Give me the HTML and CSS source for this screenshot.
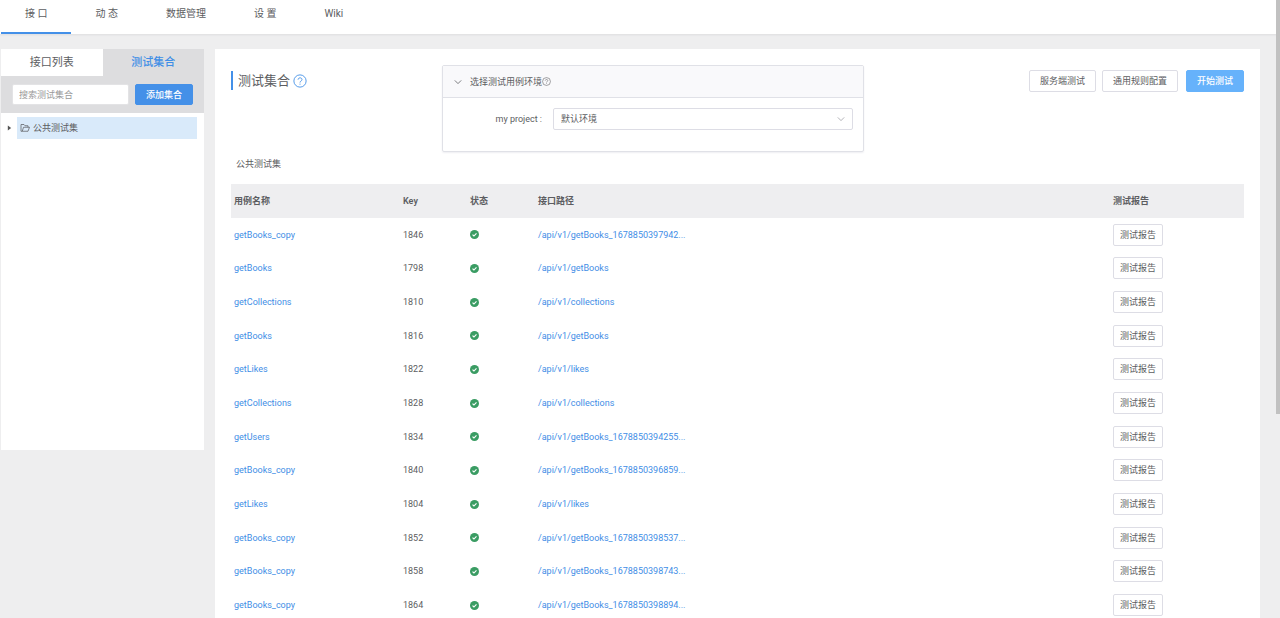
FILE: index.html
```html
<!DOCTYPE html>
<html lang="zh-CN">
  <head>
    <meta charset="UTF-8" />
    <meta name="viewport" content="width=device-width, initial-scale=1.0" />
    <title>测试集合</title>
    <link rel="stylesheet" href="styles.css">
  </head>
  <body>
    <nav class="nav">
      <a class="nav-item active" href="#">接 口</a>
      <a class="nav-item" href="#">动 态</a>
      <a class="nav-item" href="#">数据管理</a>
      <a class="nav-item" href="#">设 置</a>
      <a class="nav-item" href="#">Wiki</a>
    </nav>
    <div class="page">
      <aside class="sidebar">
        <div class="tabs">
          <button class="tab">接口列表</button>
          <button class="tab active">测试集合</button>
        </div>
        <div class="filter">
          <input class="search" type="text" placeholder="搜索测试集合" aria-label="搜索测试集合" />
          <button class="btn btn-primary">添加集合</button>
        </div>
        <div class="tree">
          <svg class="caret" viewBox="0 0 6 6"><path d="M1 0L5 3L1 6Z" /></svg>
          <a class="tree-node" href="#">
            <svg class="folder" viewBox="0 0 20 20">
              <path d="M4.500 16.500H2V3H8L10 5.500H16V8.500M4.500 16.500L7 8.500H19L16 16.500Z" />
            </svg>
            公共测试集
          </a>
        </div>
      </aside>
      <main class="content">
        <div class="toolbar">
          <h1 class="title">
            测试集合
            <a class="help" href="#" aria-label="help">
              <svg viewBox="0 0 16 16">
                <circle cx="8" cy="8" r="7" />
                <path d="M5.800 6.500C5.800 3.600 10.300 3.700 10.300 6.400C10.300 8 8 8 8 9.800M8 11V12.200" />
              </svg>
            </a>
          </h1>
          <section class="env">
            <button class="env-header">
              <svg class="arrow" viewBox="0 0 10 10"><path d="M1 3L5 7L9 3" /></svg>
              <span>选择测试用例环境</span>
              <svg class="tip" viewBox="0 0 16 16">
                <circle cx="8" cy="8" r="7" />
                <path d="M5.800 6.500C5.800 3.600 10.300 3.700 10.300 6.400C10.300 8 8 8 8 9.800M8 11V12.200" />
              </svg>
            </button>
            <div class="env-body">
              <label class="env-label" for="env">my project :</label>
              <div class="select-wrap">
                <select class="select" id="env">
                  <option>默认环境</option>
                </select>
                <svg class="select-arrow" viewBox="0 0 10 10"><path d="M1 3L5 7L9 3" /></svg>
              </div>
            </div>
          </section>
          <div class="actions">
            <button class="btn">服务端测试</button>
            <button class="btn">通用规则配置</button>
            <button class="btn btn-start">开始测试</button>
          </div>
        </div>
        <div class="col-name">公共测试集</div>
        <table class="cases">
          <thead>
            <tr>
              <th class="c-name">用例名称</th>
              <th class="c-key">Key</th>
              <th class="c-status">状态</th>
              <th>接口路径</th>
              <th class="c-report">测试报告</th>
            </tr>
          </thead>
          <tbody id="caseList"></tbody>
        </table>
      </main>
    </div>
    <div class="scroll-thumb"></div>
    <script>
      const cases = [
        ["getBooks_copy", 1846, "/api/v1/getBooks_1678850397942..."],
        ["getBooks", 1798, "/api/v1/getBooks"],
        ["getCollections", 1810, "/api/v1/collections"],
        ["getBooks", 1816, "/api/v1/getBooks"],
        ["getLikes", 1822, "/api/v1/likes"],
        ["getCollections", 1828, "/api/v1/collections"],
        ["getUsers", 1834, "/api/v1/getBooks_1678850394255..."],
        ["getBooks_copy", 1840, "/api/v1/getBooks_1678850396859..."],
        ["getLikes", 1804, "/api/v1/likes"],
        ["getBooks_copy", 1852, "/api/v1/getBooks_1678850398537..."],
        ["getBooks_copy", 1858, "/api/v1/getBooks_1678850398743..."],
        ["getBooks_copy", 1864, "/api/v1/getBooks_1678850398894..."],
      ];

      document.querySelector("#caseList").innerHTML = cases
        .map(
          ([name, key, path]) => `<tr>
            <td><a href="#">${name}</a></td>
            <td>${key}</td>
            <td>
              <svg class="ok" viewBox="0 0 16 16">
                <circle cx="8" cy="8" r="8" />
                <path d="M4.500 8.200L7 10.700L11.500 5.800" />
              </svg>
            </td>
            <td><a href="#">${path}</a></td>
            <td><button class="btn btn-report">测试报告</button></td>
          </tr>`
        )
        .join("");
    </script>
  </body>
</html>
```
FILE: styles.css
```css
* {
  box-sizing: border-box;
}
body {
  margin: 0;
  height: 100vh;
  overflow: hidden;
  display: flex;
  flex-direction: column;
  background-color: #eeeeef;
  color: #5c5d61;
  font-family: Roboto, "Noto Sans CJK SC", sans-serif;
  font-size: 9px;
  line-height: 14px;
}
a {
  color: #3f8ee6;
  text-decoration: none;
}
button,
input,
select {
  font: inherit;
  color: inherit;
}
button {
  cursor: pointer;
}
svg {
  fill: none;
  stroke: currentColor;
  flex: none;
}

.nav {
  display: flex;
  flex: none;
  height: 34px;
  padding-left: 1px;
  background-color: #fff;
  box-shadow: 0 1px 2px #dddddf;
}
.nav-item {
  padding: 7px 24px 0;
  border-bottom: 2px solid transparent;
  color: #5c5d61;
  font-size: 10px;
}
.nav-item.active {
  border-color: #4490e8;
}

.page {
  display: flex;
  flex: 1;
  min-height: 0;
  align-items: flex-start;
  gap: 11px;
  padding: 15px 20px 0 1px;
}

.sidebar {
  width: 203px;
  height: 401px;
  flex: none;
  background-color: #fff;
}
.tabs {
  display: flex;
  background-color: #dddddf;
}
.tab {
  flex: 1;
  height: 27px;
  padding: 0;
  border: none;
  background-color: #fff;
  font-size: 11px;
}
.tab.active {
  background-color: #dddddf;
  color: #3f8ee6;
  font-weight: 500;
}
.filter {
  display: flex;
  gap: 6px;
  padding: 8px 11px;
  background-color: #dddddf;
}
.search {
  flex: 1;
  min-width: 0;
  height: 21px;
  padding: 0 6px;
  border: 1px solid #e3e3e5;
  border-radius: 2px;
  background-color: #fff;
}
.search::placeholder {
  color: #999;
}
.tree {
  display: flex;
  align-items: center;
  gap: 5px;
  padding: 4px 7px 0 6px;
}
.caret {
  width: 5px;
  height: 6px;
  fill: #555;
  stroke: none;
}
.tree-node {
  display: flex;
  flex: 1;
  align-items: center;
  gap: 3px;
  height: 22px;
  padding-left: 3px;
  background-color: #d9eafa;
  color: #5c5d61;
}
.folder {
  width: 10px;
  height: 10px;
  stroke-width: 1.5;
}

.btn {
  height: 22px;
  padding: 0 10px;
  border: 1px solid #dddde5;
  border-radius: 2px;
  background-color: #fff;
  white-space: nowrap;
}
.btn-primary {
  height: 21px;
  border-color: #4490e8;
  background-color: #4490e8;
  color: #fff;
  font-weight: 500;
}
.btn-start {
  margin-left: 2px;
  border-color: #66b2fb;
  background-color: #66b2fb;
  color: #fff;
  font-weight: 500;
}
.btn-report {
  padding: 0 6px;
}

.content {
  flex: 1;
  min-width: 0;
  padding: 16px 16px 0;
  background-color: #fff;
}
.toolbar {
  display: grid;
  grid-template-columns: 5fr 10fr 9fr;
  align-items: start;
}
.title {
  display: flex;
  align-items: center;
  gap: 3px;
  height: 19px;
  margin: 6px 0 0;
  padding-left: 5px;
  border-left: 2px solid #4490e8;
  font-size: 13px;
  font-weight: 400;
}
.help {
  display: flex;
}
.help svg {
  width: 14px;
  height: 14px;
}
.env {
  border: 1px solid #e0e1e7;
  border-radius: 2px;
  box-shadow: 0 1px 2px #eeeef2;
}
.env-header {
  display: flex;
  align-items: center;
  width: 100%;
  height: 32px;
  padding: 0 11px;
  border: none;
  border-bottom: 1px solid #e0e1e7;
  background-color: #f9f9fb;
}
.arrow {
  width: 8px;
  height: 8px;
  margin-right: 8px;
}
.tip {
  width: 9px;
  height: 9px;
}
.env-body {
  display: flex;
  align-items: center;
  padding: 10px 10px 21px;
}
.env-label {
  width: 25%;
  padding-right: 11px;
  text-align: right;
}
.select-wrap {
  position: relative;
  flex: 1;
}
.select {
  display: block;
  width: 100%;
  height: 22px;
  padding: 0 7px;
  border: 1px solid #dddde5;
  border-radius: 2px;
  background-color: #fff;
  appearance: none;
}
.select-arrow {
  position: absolute;
  top: 7px;
  right: 8px;
  width: 8px;
  height: 8px;
  color: #a0a0a6;
  pointer-events: none;
}
.actions {
  display: flex;
  justify-content: flex-end;
  gap: 6px;
  padding-top: 5px;
}

.col-name {
  padding: 5px 5px 13px;
}
.cases {
  width: 100%;
  height: 438px;
  table-layout: fixed;
  border-collapse: collapse;
}
.cases th,
.cases td {
  padding: 0 3px;
  text-align: left;
}
.cases th {
  height: 34px;
  background-color: #eeeef0;
  font-weight: 600;
}
.c-name {
  width: 169px;
}
.c-key {
  width: 67px;
}
.c-status {
  width: 68px;
}
.c-report {
  width: 134px;
}
.ok {
  display: block;
  width: 9px;
  height: 9px;
}
.ok circle {
  fill: #3a9c63;
  stroke: none;
}
.ok path {
  stroke: #fff;
  stroke-width: 2;
}

.scroll-thumb {
  position: fixed;
  top: 0;
  right: 0;
  width: 4px;
  height: 67vh;
  background-color: #c1c1c1;
}
```
